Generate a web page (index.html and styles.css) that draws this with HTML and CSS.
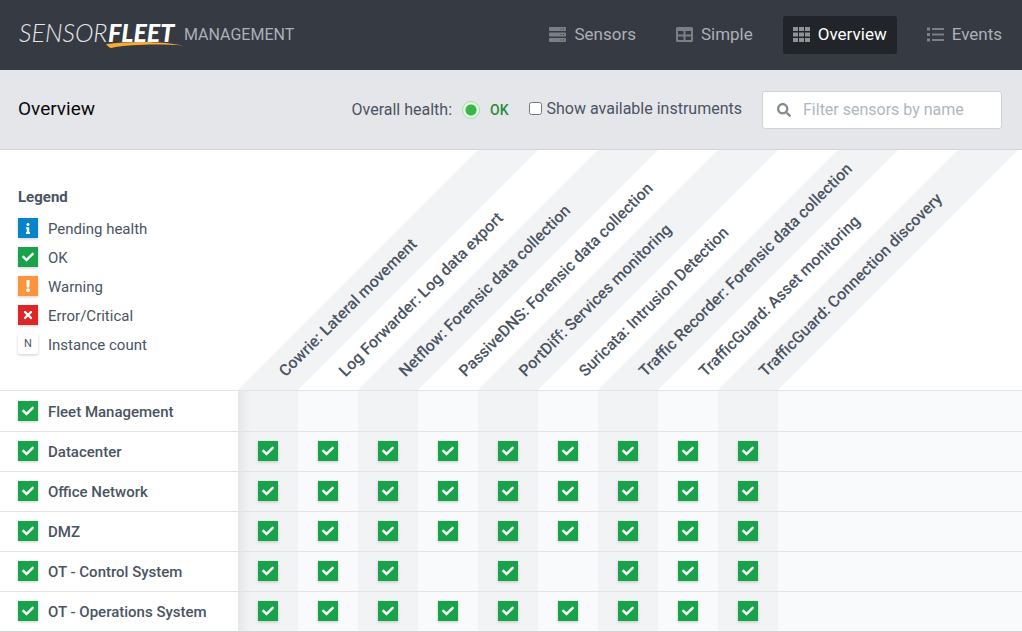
FILE: index.html
```html
<!DOCTYPE html>
<html lang="en">
<head>
<meta charset="utf-8">
<meta name="viewport" content="width=device-width, initial-scale=1">
<title>SensorFleet Management - Overview</title>
<link rel="stylesheet" href="styles.css">
</head>
<body>
<svg class="sprite" aria-hidden="true">
  <symbol id="check" viewBox="0 0 512 512"><path d="M173.898 439.404l-166.4-166.4c-9.997-9.997-9.997-26.206 0-36.204l36.203-36.204c9.997-9.998 26.207-9.998 36.204 0L192 312.69 432.095 72.596c9.997-9.997 26.207-9.997 36.204 0l36.203 36.204c9.997 9.997 9.997 26.206 0 36.204l-294.4 294.401c-9.998 9.997-26.207 9.997-36.204-.001z"/></symbol>
  <symbol id="cross" viewBox="0 0 352 512"><path d="M242.72 256l100.07-100.07c12.28-12.28 12.28-32.19 0-44.48l-22.24-22.24c-12.28-12.28-32.19-12.28-44.48 0L176 189.28 75.93 89.21c-12.28-12.28-32.19-12.28-44.48 0L9.21 111.45c-12.28 12.28-12.28 32.19 0 44.48L109.28 256 9.21 356.07c-12.28 12.28-12.28 32.19 0 44.48l22.24 22.24c12.28 12.28 32.2 12.28 44.48 0L176 322.72l100.07 100.07c12.28 12.28 32.2 12.28 44.48 0l22.24-22.24c12.28-12.28 12.28-32.19 0-44.48L242.72 256z"/></symbol>
  <symbol id="info" viewBox="0 0 192 512"><path d="M20 424.229h20V279.771H20c-11.046 0-20-8.954-20-20V212c0-11.046 8.954-20 20-20h112c11.046 0 20 8.954 20 20v212.229h20c11.046 0 20 8.954 20 20V492c0 11.046-8.954 20-20 20H20c-11.046 0-20-8.954-20-20v-47.771c0-11.046 8.954-20 20-20zM96 0C56.235 0 24 32.235 24 72s32.235 72 72 72 72-32.235 72-72S135.764 0 96 0z"/></symbol>
  <symbol id="exclamation" viewBox="0 0 192 512"><path d="M176 432c0 44.112-35.888 80-80 80s-80-35.888-80-80 35.888-80 80-80 80 35.888 80 80zM25.26 25.199l13.6 272C39.499 309.972 50.041 320 62.83 320h66.34c12.789 0 23.331-10.028 23.97-22.801l13.6-272C167.425 11.49 156.496 0 142.77 0H49.23C35.504 0 24.575 11.49 25.26 25.199z"/></symbol>
  <symbol id="search" viewBox="0 0 512 512"><path d="M505 442.7L405.3 343c-4.5-4.5-10.6-7-17-7H372c27.6-35.3 44-79.7 44-128C416 93.1 322.9 0 208 0S0 93.1 0 208s93.1 208 208 208c48.3 0 92.7-16.4 128-44v16.3c0 6.4 2.5 12.5 7 17l99.7 99.7c9.4 9.4 24.6 9.4 33.9 0l28.3-28.3c9.4-9.4 9.4-24.6.1-34zM208 336c-70.7 0-128-57.2-128-128 0-70.7 57.2-128 128-128 70.7 0 128 57.2 128 128 0 70.7-57.2 128-128 128z"/></symbol>
</svg>

<header class="topbar">
  <a class="brand" href="#">
    <svg class="logo" viewBox="0 0 164 32" role="img" aria-label="SensorFleet">
      <text class="logo-light" x="0" y="23">SENSOR</text>
      <text class="logo-heavy" x="89" y="23">FLEET</text>
      <path class="swoosh" d="M87 25 C110 22 142 22 164 26.500 C142 25 112 25 92 29 Q89 28 87 25Z"/>
    </svg>
    <span class="product">MANAGEMENT</span>
  </a>
  <nav class="nav">
    <a class="nav-link" href="#">
      <svg class="nav-icon" viewBox="0 0 17 15" fill-rule="evenodd"><path d="M1 0h15q1 0 1 1v2q0 1-1 1H1Q0 4 0 3V1q0-1 1-1zM11.500 1.500v1h1v-1zM14 1.500v1h1v-1zM1 5.500h15q1 0 1 1v2q0 1-1 1H1q-1 0-1-1v-2q0-1 1-1zM11.500 7v1h1V7zM14 7v1h1V7zM1 11h15q1 0 1 1v2q0 1-1 1H1q-1 0-1-1v-2q0-1 1-1zM11.500 12.500v1h1v-1zM14 12.500v1h1v-1z"/></svg>
      Sensors
    </a>
    <a class="nav-link" href="#">
      <svg class="nav-icon" viewBox="0 0 17 15" fill-rule="evenodd"><path d="M1.500 0h14q1.500 0 1.500 1.500v12q0 1.500-1.500 1.500h-14Q0 15 0 13.500v-12Q0 0 1.500 0zM2 4v3.500h5.500V4zM9.500 4v3.500H15V4zM2 9.500V13h5.500V9.500zM9.500 9.500V13H15V9.500z"/></svg>
      Simple
    </a>
    <a class="nav-link active" href="#" aria-current="page">
      <svg class="nav-icon" viewBox="0 0 17 15"><path d="M0 0h5v4H0zM6 0h5v4H6zM12 0h5v4h-5zM0 5.500h5v4H0zM6 5.500h5v4H6zM12 5.500h5v4h-5zM0 11h5v4H0zM6 11h5v4H6zM12 11h5v4h-5z"/></svg>
      Overview
    </a>
    <a class="nav-link" href="#">
      <svg class="nav-icon" viewBox="0 0 17 15"><path d="M0 .500h3v3H0zM0 6h3v3H0zM0 11.500h3v3H0zM5 1h12v2H5zM5 6.500h12v2H5zM5 12h12v2H5z"/></svg>
      Events
    </a>
  </nav>
</header>

<section class="toolbar">
  <h1 class="title">Overview</h1>
  <div class="health">Overall health: <span class="dot"></span><strong class="health-value">OK</strong></div>
  <label class="toggle"><input class="toggle-box" type="checkbox">Show available instruments</label>
  <div class="search">
    <svg class="search-icon" aria-hidden="true"><use href="#search"/></svg>
    <input class="search-input" type="text" placeholder="Filter sensors by name" aria-label="Filter sensors by name">
  </div>
</section>

<main class="matrix-wrap">
<table class="matrix">
  <colgroup><col class="col-name"><col class="col-tool" span="9"><col></colgroup>
  <thead>
    <tr>
      <td class="legend">
        <h2 class="legend-title">Legend</h2>
        <ul class="legend-list">
          <li class="entry"><span class="badge pending"><svg class="glyph small"><use href="#info"/></svg></span>Pending health</li>
          <li class="entry"><span class="badge"><svg class="glyph"><use href="#check"/></svg></span>OK</li>
          <li class="entry"><span class="badge warning"><svg class="glyph"><use href="#exclamation"/></svg></span>Warning</li>
          <li class="entry"><span class="badge error"><svg class="glyph"><use href="#cross"/></svg></span>Error/Critical</li>
          <li class="entry"><span class="badge count">N</span>Instance count</li>
        </ul>
      </td>
      <th class="tool" scope="col"><span class="tool-name">Cowrie: Lateral movement</span></th>
      <th class="tool" scope="col"><span class="tool-name">Log Forwarder: Log data export</span></th>
      <th class="tool" scope="col"><span class="tool-name">Netflow: Forensic data collection</span></th>
      <th class="tool" scope="col"><span class="tool-name">PassiveDNS: Forensic data collection</span></th>
      <th class="tool" scope="col"><span class="tool-name">PortDiff: Services monitoring</span></th>
      <th class="tool" scope="col"><span class="tool-name">Suricata: Intrusion Detection</span></th>
      <th class="tool" scope="col"><span class="tool-name">Traffic Recorder: Forensic data collection</span></th>
      <th class="tool" scope="col"><span class="tool-name">TrafficGuard: Asset monitoring</span></th>
      <th class="tool" scope="col"><span class="tool-name">TrafficGuard: Connection discovery</span></th>
      <td></td>
    </tr>
  </thead>
  <tbody>
    <tr class="row">
      <th class="sensor" scope="row"><span class="entry"><span class="badge"><svg class="glyph"><use href="#check"/></svg></span>Fleet Management</span></th>
      <td class="cell"></td><td class="cell"></td><td class="cell"></td><td class="cell"></td><td class="cell"></td><td class="cell"></td><td class="cell"></td><td class="cell"></td><td class="cell"></td><td class="rest"></td>
    </tr>
    <tr class="row">
      <th class="sensor" scope="row"><span class="entry"><span class="badge"><svg class="glyph"><use href="#check"/></svg></span>Datacenter</span></th>
      <td class="cell"><span class="badge"><svg class="glyph"><use href="#check"/></svg></span></td>
      <td class="cell"><span class="badge"><svg class="glyph"><use href="#check"/></svg></span></td>
      <td class="cell"><span class="badge"><svg class="glyph"><use href="#check"/></svg></span></td>
      <td class="cell"><span class="badge"><svg class="glyph"><use href="#check"/></svg></span></td>
      <td class="cell"><span class="badge"><svg class="glyph"><use href="#check"/></svg></span></td>
      <td class="cell"><span class="badge"><svg class="glyph"><use href="#check"/></svg></span></td>
      <td class="cell"><span class="badge"><svg class="glyph"><use href="#check"/></svg></span></td>
      <td class="cell"><span class="badge"><svg class="glyph"><use href="#check"/></svg></span></td>
      <td class="cell"><span class="badge"><svg class="glyph"><use href="#check"/></svg></span></td>
      <td class="rest"></td>
    </tr>
    <tr class="row">
      <th class="sensor" scope="row"><span class="entry"><span class="badge"><svg class="glyph"><use href="#check"/></svg></span>Office Network</span></th>
      <td class="cell"><span class="badge"><svg class="glyph"><use href="#check"/></svg></span></td>
      <td class="cell"><span class="badge"><svg class="glyph"><use href="#check"/></svg></span></td>
      <td class="cell"><span class="badge"><svg class="glyph"><use href="#check"/></svg></span></td>
      <td class="cell"><span class="badge"><svg class="glyph"><use href="#check"/></svg></span></td>
      <td class="cell"><span class="badge"><svg class="glyph"><use href="#check"/></svg></span></td>
      <td class="cell"><span class="badge"><svg class="glyph"><use href="#check"/></svg></span></td>
      <td class="cell"><span class="badge"><svg class="glyph"><use href="#check"/></svg></span></td>
      <td class="cell"><span class="badge"><svg class="glyph"><use href="#check"/></svg></span></td>
      <td class="cell"><span class="badge"><svg class="glyph"><use href="#check"/></svg></span></td>
      <td class="rest"></td>
    </tr>
    <tr class="row">
      <th class="sensor" scope="row"><span class="entry"><span class="badge"><svg class="glyph"><use href="#check"/></svg></span>DMZ</span></th>
      <td class="cell"><span class="badge"><svg class="glyph"><use href="#check"/></svg></span></td>
      <td class="cell"><span class="badge"><svg class="glyph"><use href="#check"/></svg></span></td>
      <td class="cell"><span class="badge"><svg class="glyph"><use href="#check"/></svg></span></td>
      <td class="cell"><span class="badge"><svg class="glyph"><use href="#check"/></svg></span></td>
      <td class="cell"><span class="badge"><svg class="glyph"><use href="#check"/></svg></span></td>
      <td class="cell"><span class="badge"><svg class="glyph"><use href="#check"/></svg></span></td>
      <td class="cell"><span class="badge"><svg class="glyph"><use href="#check"/></svg></span></td>
      <td class="cell"><span class="badge"><svg class="glyph"><use href="#check"/></svg></span></td>
      <td class="cell"><span class="badge"><svg class="glyph"><use href="#check"/></svg></span></td>
      <td class="rest"></td>
    </tr>
    <tr class="row">
      <th class="sensor" scope="row"><span class="entry"><span class="badge"><svg class="glyph"><use href="#check"/></svg></span>OT - Control System</span></th>
      <td class="cell"><span class="badge"><svg class="glyph"><use href="#check"/></svg></span></td>
      <td class="cell"><span class="badge"><svg class="glyph"><use href="#check"/></svg></span></td>
      <td class="cell"><span class="badge"><svg class="glyph"><use href="#check"/></svg></span></td>
      <td class="cell"></td>
      <td class="cell"><span class="badge"><svg class="glyph"><use href="#check"/></svg></span></td>
      <td class="cell"></td>
      <td class="cell"><span class="badge"><svg class="glyph"><use href="#check"/></svg></span></td>
      <td class="cell"><span class="badge"><svg class="glyph"><use href="#check"/></svg></span></td>
      <td class="cell"><span class="badge"><svg class="glyph"><use href="#check"/></svg></span></td>
      <td class="rest"></td>
    </tr>
    <tr class="row">
      <th class="sensor" scope="row"><span class="entry"><span class="badge"><svg class="glyph"><use href="#check"/></svg></span>OT - Operations System</span></th>
      <td class="cell"><span class="badge"><svg class="glyph"><use href="#check"/></svg></span></td>
      <td class="cell"><span class="badge"><svg class="glyph"><use href="#check"/></svg></span></td>
      <td class="cell"><span class="badge"><svg class="glyph"><use href="#check"/></svg></span></td>
      <td class="cell"><span class="badge"><svg class="glyph"><use href="#check"/></svg></span></td>
      <td class="cell"><span class="badge"><svg class="glyph"><use href="#check"/></svg></span></td>
      <td class="cell"><span class="badge"><svg class="glyph"><use href="#check"/></svg></span></td>
      <td class="cell"><span class="badge"><svg class="glyph"><use href="#check"/></svg></span></td>
      <td class="cell"><span class="badge"><svg class="glyph"><use href="#check"/></svg></span></td>
      <td class="cell"><span class="badge"><svg class="glyph"><use href="#check"/></svg></span></td>
      <td class="rest"></td>
    </tr>
  </tbody>
</table>
</main>
</body>
</html>
```
FILE: styles.css
```css
*, *::before, *::after { box-sizing: border-box; }

body {
  margin: 0;
  background: #fff;
  color: #4a5463;
  font: 15px/20px Roboto, "Liberation Sans", sans-serif;
}

.sprite { display: none; }

/* Top bar */
.topbar {
  display: flex;
  align-items: center;
  justify-content: space-between;
  height: 70px;
  padding: 0 10px 0 19px;
  background: #363a42;
}
.brand {
  display: flex;
  align-items: center;
  gap: 1px;
  color: #acb0b8;
  text-decoration: none;
}
.logo { width: 164px; height: 32px; overflow: visible; }
.logo-light { font: italic 300 25px Lato, sans-serif; fill: #e6e7e9; }
.logo-heavy { font: italic 900 25px Lato, sans-serif; fill: #fff; }
.swoosh { fill: #f9ac35; }
.product { font-size: 16px; }

.nav { display: flex; gap: 20px; }
.nav-link {
  display: flex;
  align-items: center;
  gap: 8px;
  height: 38px;
  padding: 0 10px 2px;
  border-radius: 3px;
  color: #acb0b8;
  font-size: 17px;
  text-decoration: none;
}
.nav-icon { width: 17px; height: 15px; fill: #7b7f86; }
.nav-link.active { background: #212428; color: #fff; }
.nav-link.active .nav-icon { fill: #919294; }

/* Toolbar */
.toolbar {
  display: flex;
  align-items: center;
  gap: 20px;
  height: 80px;
  padding: 0 20px 0 18px;
  border-bottom: 1px solid #d1d4da;
  background: #e5e6ea;
  font-size: 16px;
}
.title {
  margin: 0 auto 0 0;
  padding-bottom: 2px;
  color: #08090b;
  font-size: 19px;
  font-weight: 400;
}
.health { display: flex; align-items: center; gap: 10px; }
.dot {
  width: 18px;
  height: 18px;
  border: 1px solid #9be5a5;
  border-radius: 50%;
  background: radial-gradient(circle, #3ab54a 5px, #e3f9e5 6px);
}
.health-value { color: #2c8a3e; font-size: 14px; font-weight: 500; }
.toggle { display: flex; align-items: center; gap: 5px; padding-bottom: 2px; }
.toggle-box { width: 13px; height: 13px; margin: 0; }
.search {
  display: flex;
  align-items: center;
  gap: 12px;
  width: 240px;
  height: 38px;
  padding: 0 14px;
  border: 1px solid #cfd2dc;
  border-radius: 3px;
  background: #fff;
}
.search-icon { flex: none; width: 14px; height: 14px; fill: #828a92; }
.search-input {
  flex: 1;
  min-width: 0;
  padding: 0;
  border: 0;
  outline: 0;
  background: none;
  color: #4a5463;
  font: inherit;
}
.search-input::placeholder { color: #b0b7be; }

/* Status matrix */
.matrix-wrap { overflow: hidden; }
.matrix {
  width: 100%;
  border-bottom: 1px solid #d1d4da;
  border-spacing: 0;
  table-layout: fixed;
}
.col-name { width: 238px; }
.col-tool { width: 60px; }
.matrix td, .matrix th { padding: 0; }
.matrix .legend {
  height: 240px;
  padding: 37px 18px 0;
  vertical-align: top;
}
.legend-title { margin: 0 0 11px; font-size: 15px; font-weight: 700; }
.legend-list {
  display: grid;
  gap: 7px;
  margin: 0;
  padding: 0;
  list-style: none;
}
.entry {
  display: flex;
  align-items: flex-start;
  gap: 10px;
  line-height: 22px;
}

/* Slanted column heads */
.tool { position: relative; }
.tool:nth-child(even)::before {
  content: "";
  position: absolute;
  inset: 0;
  background: #f2f3f5;
  transform: skewX(-45deg);
  transform-origin: 0 100%;
}
.tool-name {
  position: absolute;
  bottom: 9px;
  left: 51px;
  font-size: 16px;
  font-weight: 500;
  white-space: nowrap;
  transform: rotate(-45deg);
  transform-origin: 0 100%;
}

.cell, .rest, .sensor { height: 40px; border-top: 1px solid #e3e4e8; }
.row:first-child > * { height: 41px; }
.cell, .rest { background: #f9fafc; }
.cell:nth-child(even) { background: #f2f3f5; }
.matrix .cell { padding-bottom: 1px; }
.cell .badge { margin: 0 auto; }
.matrix .sensor {
  position: relative;
  padding: 1px 18px 0;
  font-weight: 500;
  text-align: left;
}
.sensor::after {
  content: "";
  position: absolute;
  top: 0;
  bottom: 0;
  left: 100%;
  width: 12px;
  background: linear-gradient(to right, rgba(0, 0, 0, .05), rgba(0, 0, 0, 0));
}

.badge {
  display: flex;
  flex: none;
  align-items: center;
  justify-content: center;
  width: 20px;
  height: 20px;
  background: #18a34a;
  box-shadow: 0 1px 3px rgba(0, 0, 0, .2);
}
.badge.pending { background: #0784c9; }
.badge.warning { background: #fb943c; }
.badge.error { background: #dc2627; }
.badge.count { border-radius: 2px; background: #fff; font-size: 11px; }
.glyph { width: 12px; height: 12px; fill: #fff; }
.glyph.small { height: 11px; }
```
